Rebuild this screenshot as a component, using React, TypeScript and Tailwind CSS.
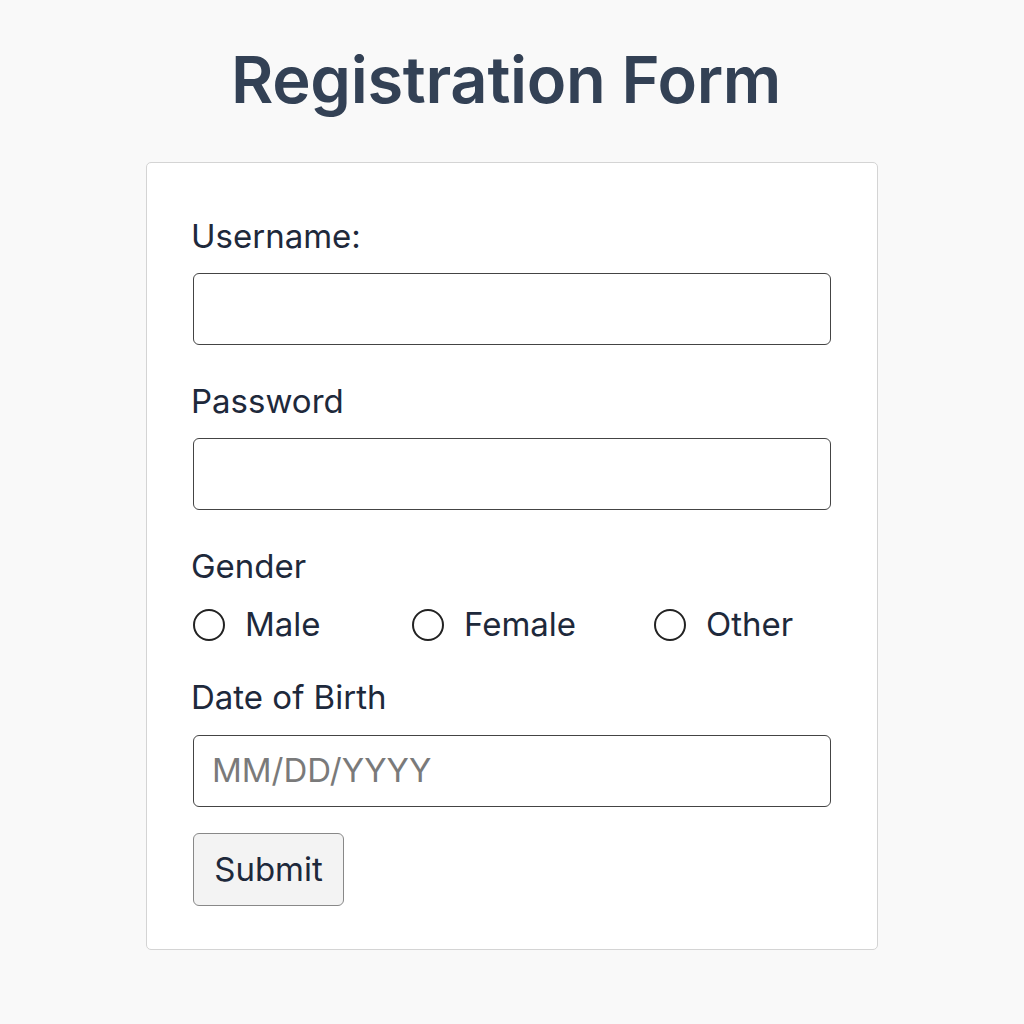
import React from "react";

function Radio({ label, width }: { label: string; width: string }) {
  return (
    <label className={`flex items-center gap-[20px] ${width}`}>
      <span className="w-[32px] h-[32px] rounded-full border-[2px] border-[#222] bg-white shrink-0" />
      <span>{label}</span>
    </label>
  );
}

export default function App() {
  return (
    <div
      className="w-[1024px] h-[1024px] bg-[#f9f9f9] flex flex-col items-center text-[#1e293b]"
      style={{ fontFamily: "Inter, 'Noto Sans', sans-serif" }}
    >
      <h1 className="mt-[40px] mr-[12px] h-[80px] leading-[80px] text-[65px] font-semibold text-[#334155] tracking-[-0.3px]">
        Registration Form
      </h1>
      <div className="mt-[42px] w-[732px] bg-white border border-[#d4d4d4] rounded-[5px] px-[46px] pt-[55px] pb-[43px] text-[33px]">
        <div className="leading-[36px] -ml-[2px]">Username:</div>
        <div className="mt-[19px] h-[72px] border-[1.5px] border-[#444] rounded-[6px]" />
        <div className="mt-[38px] leading-[36px] -ml-[2px]">Password</div>
        <div className="mt-[19px] h-[72px] border-[1.5px] border-[#444] rounded-[6px]" />
        <div className="mt-[38px] leading-[36px] -ml-[2px]">Gender</div>
        <div className="mt-[23px] h-[36px] flex items-center">
          <Radio label="Male" width="w-[219px]" />
          <Radio label="Female" width="w-[242px]" />
          <Radio label="Other" width="w-auto" />
        </div>
        <div className="mt-[36px] leading-[36px] -ml-[2px]">Date of Birth</div>
        <div className="mt-[20px] h-[72px] border-[1.5px] border-[#444] rounded-[6px] flex items-center px-[18px] text-[#7a7a7a]">
          MM/DD/YYYY
        </div>
        <button className="mt-[26px] w-[151px] h-[73px] bg-[#f3f3f3] border-[1.5px] border-[#888] rounded-[6px] text-[33px] text-[#1e293b]">
          Submit
        </button>
      </div>
    </div>
  );
}
